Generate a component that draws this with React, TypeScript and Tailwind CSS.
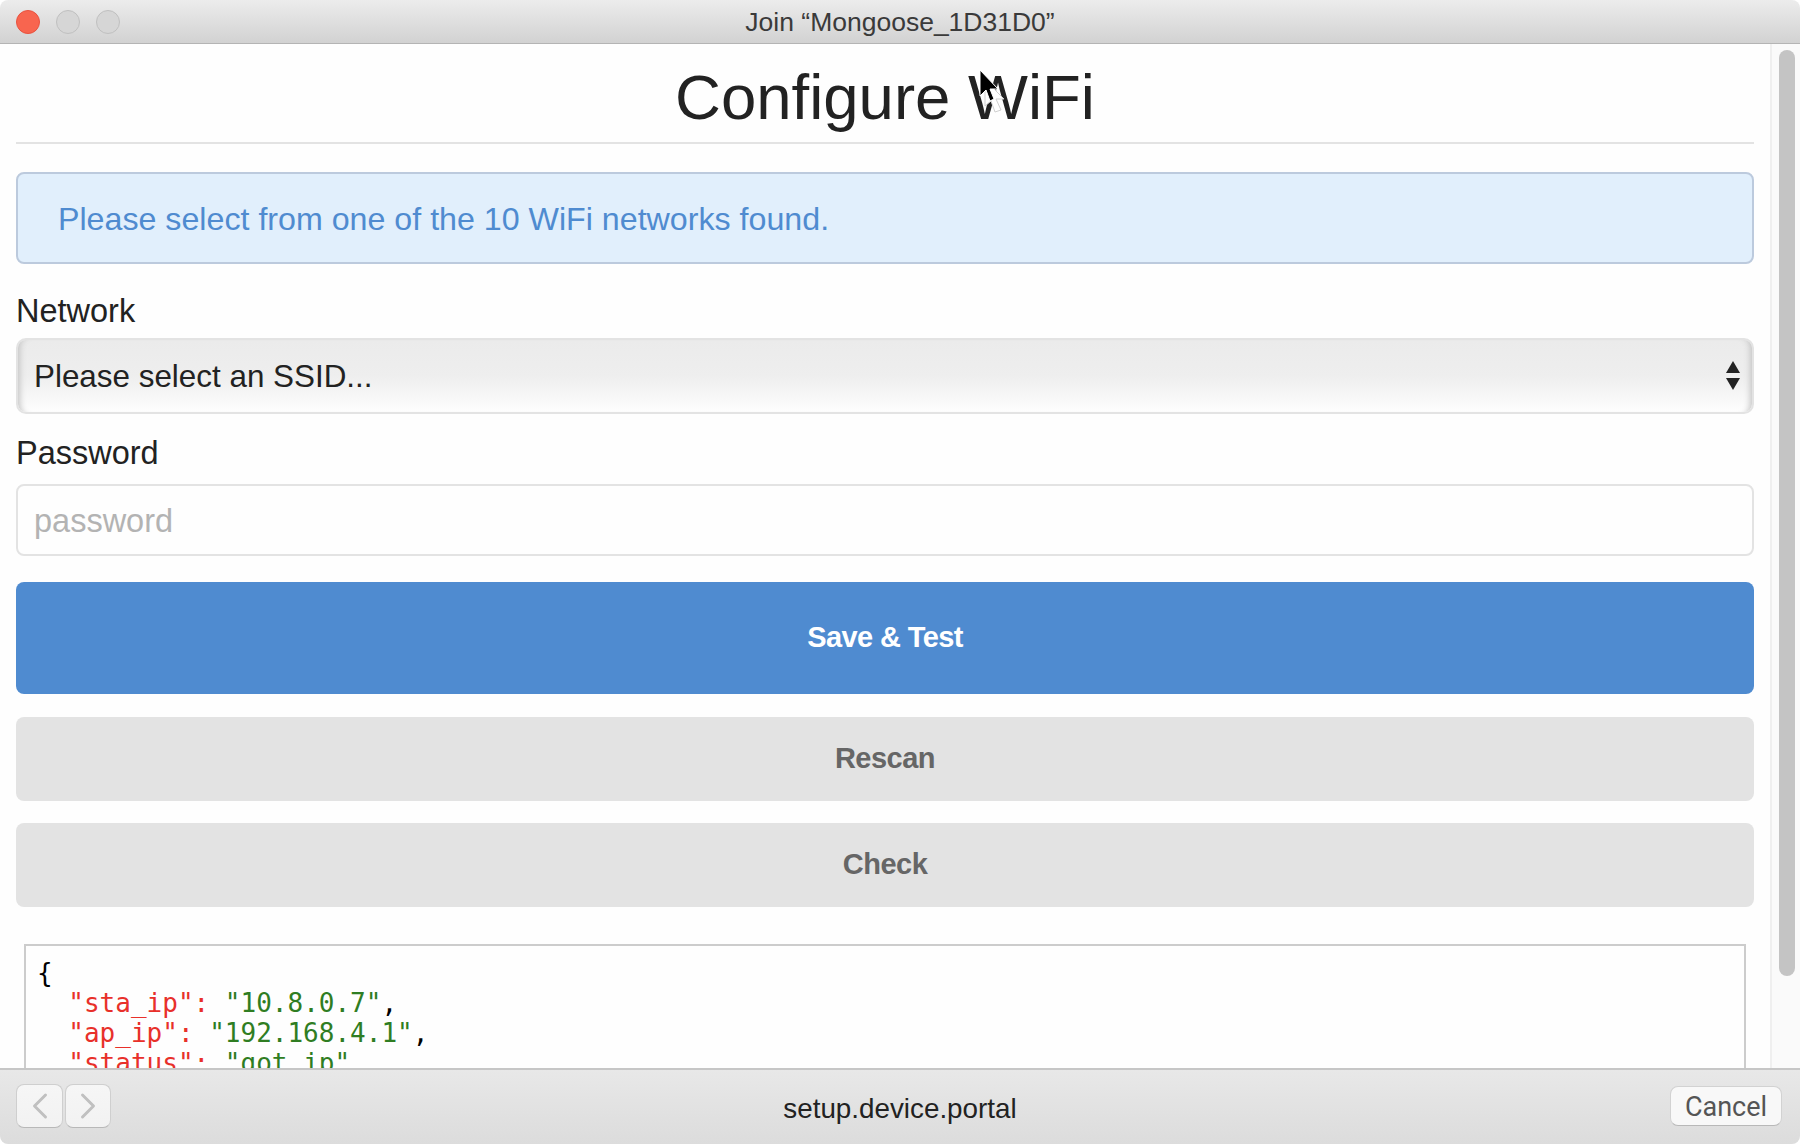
import React from 'react';
import { ChevronLeft, ChevronRight } from 'lucide-react';

const sans = { fontFamily: '"Liberation Sans", Arial, sans-serif' };

const TrafficLight: React.FC<{ className: string }> = ({ className }) => (
  <div className={`w-[24px] h-[24px] rounded-full border ${className}`}></div>
);

const StatusJson: React.FC = () => (
  <pre className="mt-[37px] mx-[8px] border-2 border-[#cccccc] border-b-0 bg-[#fefefe] h-[200px] px-[11px] pt-[12px] font-['DejaVu_Sans_Mono',monospace] text-[26px] leading-[30px] text-black">
    {'{\n  '}
    <span className="text-[#e8302a]">"sta_ip"</span>
    <span className="text-[#e8302a]">:</span>{' '}
    <span className="text-[#2f7d22]">"10.8.0.7"</span>
    {',\n  '}
    <span className="text-[#e8302a]">"ap_ip"</span>
    <span className="text-[#e8302a]">:</span>{' '}
    <span className="text-[#2f7d22]">"192.168.4.1"</span>
    {',\n  '}
    <span className="text-[#e8302a]">"status"</span>
    <span className="text-[#e8302a]">:</span>{' '}
    <span className="text-[#2f7d22]">"got_ip"</span>
    {',\n'}
  </pre>
);

const Cursor: React.FC = () => (
  <svg className="absolute left-[972px] top-[66px]" width="44" height="52" viewBox="0 0 44 52">
    <path d="M13 14 L13 40 L19 35 L23 46 L29 44 L24 33 L32 33 Z" fill="#ffffff" stroke="#d0d0d0" strokeWidth="1" />
    <path d="M8 4 L8 30 L14 24 L18 35 L22 33 L18 23 L26 23 Z" fill="#000000" stroke="#ffffff" strokeWidth="1" />
  </svg>
);

const App: React.FC = () => {
  return (
    <div className="relative h-screen w-full flex flex-col overflow-hidden bg-white" style={sans}>
      <header className="h-[44px] shrink-0 flex items-center relative border-b border-[#b4b4b4] bg-gradient-to-b from-[#ececec] to-[#d2d2d2] rounded-t-[8px]">
        <div className="flex gap-[16px] pl-[16px]">
          <TrafficLight className="bg-[#f8654f] border-[#e9523f]" />
          <TrafficLight className="bg-[#d6d6d6] border-[#c0c0c0]" />
          <TrafficLight className="bg-[#d6d6d6] border-[#c0c0c0]" />
        </div>
        <div className="absolute inset-x-0 pt-[3px] text-center text-[26.5px] text-[#3a3a3a]">Join “Mongoose_1D31D0”</div>
      </header>

      <main className="flex-1 flex min-h-0 overflow-hidden bg-[#fefefe]">
        <div className="flex-1 min-w-0 px-[16px]">
          <h1 className="h-[98px] box-content border-b-2 border-[#e3e3e3] flex items-center justify-center text-[63.5px] font-normal text-[#222222]">
            <span className="translate-y-[5px]">Configure WiFi</span>
          </h1>

          <div className="mt-[28px] h-[92px] flex items-center rounded-[8px] border-2 border-[#bccadd] bg-[#e1effc] px-[40px] pt-[2px] text-[32.2px] text-[#4f8bd0]">
            Please select from one of the 10 WiFi networks found.
          </div>

          <label className="block mt-[27px] mb-[7px] text-[32.5px] leading-[40px] text-[#222222]">Network</label>
          <div className="h-[76px] flex items-center justify-between rounded-[10px] border-2 border-[#e3e3e3] bg-gradient-to-b from-[#ebebeb] via-[#eeeeee] to-[#fefefe] shadow-[inset_8px_0_6px_-6px_#c4c4c4,inset_-8px_0_6px_-6px_#c4c4c4] pl-[16px] pr-[11px] text-[31.4px] text-[#222222]">
            <span className="translate-y-[1px]">Please select an SSID...</span>
            <svg width="16" height="30" viewBox="0 0 16 30">
              <path d="M8 0 L15 12 L1 12 Z" fill="#222222" />
              <path d="M1 17 L15 17 L8 29 Z" fill="#222222" />
            </svg>
          </div>

          <label className="block mt-[19px] mb-[11px] text-[32.5px] leading-[40px] text-[#222222]">Password</label>
          <input
            type="password"
            placeholder="password"
            className="block w-full h-[72px] rounded-[8px] border-2 border-[#e3e3e3] bg-[#fefefe] px-[16px] pt-[2px] text-[32.5px] outline-none placeholder-[#b3b3b3]"
          />

          <button className="block w-full mt-[26px] h-[112px] rounded-[8px] bg-[#4f8bd0] text-[29px] tracking-[-0.6px] font-bold text-white">
            Save &amp; Test
          </button>
          <button className="block w-full mt-[23px] h-[84px] rounded-[8px] bg-[#e3e3e3] text-[29px] tracking-[-0.5px] font-bold text-[#666666]">
            Rescan
          </button>
          <button className="block w-full mt-[22px] h-[84px] rounded-[8px] bg-[#e3e3e3] text-[29px] tracking-[-0.5px] font-bold text-[#666666]">
            Check
          </button>

          <StatusJson />
        </div>

        <div className="w-[30px] shrink-0 border-l-2 border-[#efefef] bg-[#fafafa] pl-[7px] pt-[6px]">
          <div className="w-[16px] h-[926px] rounded-full bg-[#c4c4c4]"></div>
        </div>
      </main>

      <footer className="h-[76px] shrink-0 flex items-center justify-between relative border-t-2 border-[#c6c6c6] bg-gradient-to-b from-[#e8e8e8] to-[#dcdcdc] rounded-b-[8px] pl-[16px] pr-[18px] pb-[2px]">
        <div className="flex gap-[2px]">
          <button className="w-[47px] h-[44px] flex items-center justify-center rounded-[8px] border border-[#cfcfcf] border-b-[#b8b8b8] bg-gradient-to-b from-[#f6f6f6] to-[#f2f2f2]">
            <ChevronLeft size={44} strokeWidth={1.6} className="shrink-0 text-[#c0c0c0]" />
          </button>
          <button className="w-[46px] h-[44px] flex items-center justify-center rounded-[8px] border border-[#cfcfcf] border-b-[#b8b8b8] bg-gradient-to-b from-[#f6f6f6] to-[#f2f2f2]">
            <ChevronRight size={44} strokeWidth={1.6} className="shrink-0 text-[#c0c0c0]" />
          </button>
        </div>
        <div className="absolute inset-x-0 pt-[6px] text-center text-[27.8px] text-[#222222] pointer-events-none">setup.device.portal</div>
        <button className="w-[112px] h-[40px] pt-[2px] flex items-center justify-center rounded-[8px] border border-[#d2d2d2] border-b-[#b8b8b8] bg-[#f8f8f8] font-['Roboto',sans-serif] text-[27px] text-[#555555]">
          Cancel
        </button>
      </footer>

      <Cursor />
    </div>
  );
};

export default App;
